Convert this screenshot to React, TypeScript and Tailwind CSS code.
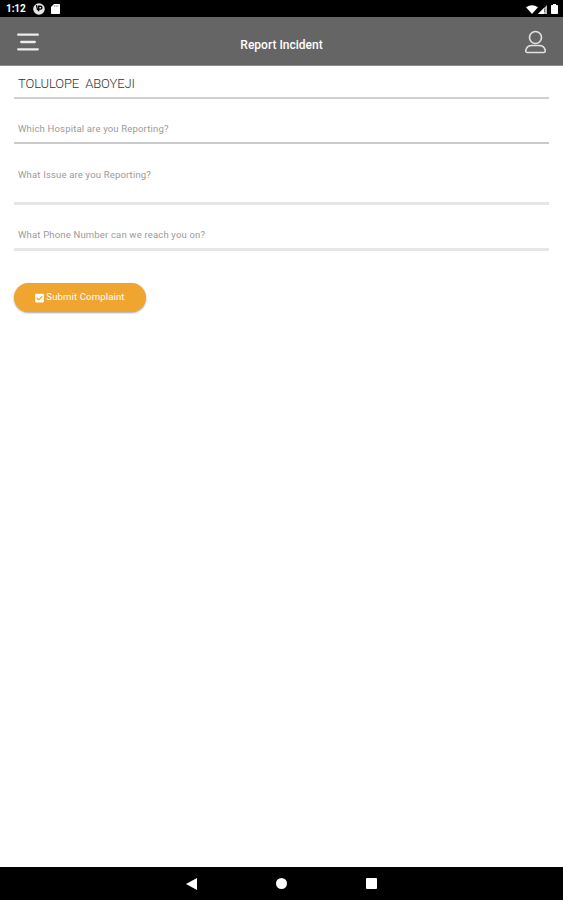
import { FaCheckSquare } from 'react-icons/fa';

function StatusBar() {
  return (
    <div className="flex h-[17px] items-center justify-between bg-black pl-[6px] pr-[5px] text-white">
      <div className="flex items-center pt-px">
        <span className="w-[27px] text-[10px] leading-none font-bold tracking-[-0.1px]">1:12</span>
        <svg className="h-[12px] w-[12px]" viewBox="0 0 11 11">
          <circle cx="5.5" cy="5.5" r="5.3" fill="#e6e6e6" />
          <path d="M3.200 2l1 4.500M5.200 7.500V3h1.700a1.300 1.300 0 0 1 0 2.600H5.400" fill="none" stroke="#000" strokeWidth="1.2" />
        </svg>
        <svg className="ml-[6px] h-[10px] w-[9px]" viewBox="0 0 9 10">
          <path d="M3 0h5.2q.8 0 .8.8v8.4q0 .8-.8.8H.8Q0 10 0 9.200V3z" fill="#fff" />
          <path d="M3.700 1.300v1.600M5.300 1.300v1.600M6.900 1.300v1.600" stroke="#777" strokeWidth=".7" />
        </svg>
      </div>
      <div className="flex items-center pt-px">
        <svg className="h-[9px] w-[12px]" viewBox="0 0 12 9">
          <path d="M0 2.200Q6-1.800 12 2.200L6 9z" fill="#fff" />
        </svg>
        <svg className="h-[9px] w-[9px]" viewBox="0 0 9 9">
          <path d="M9 0v9H0z" fill="#bbb" />
          <path d="M6 3v6H0z" fill="#fff" />
          <path d="M6.500 4v3" stroke="#555" strokeWidth=".8" />
        </svg>
        <svg className="ml-[4px] h-[10px] w-[7px]" viewBox="0 0 7 10">
          <path d="M2 0h3v1h1.300q.7 0 .7.7v7.600q0 .7-.7.7H.7Q0 10 0 9.300V1.700Q0 1 .7 1H2z" fill="#fff" />
        </svg>
      </div>
    </div>
  );
}

function Header() {
  return (
    <header className="flex h-[49px] items-center justify-between border-b border-[#8a8a8a] bg-[#656565] pt-[2px] pl-[17px] pr-[17px]">
      <button aria-label="Menu">
        <svg className="h-[18px] w-[22px]" viewBox="0 0 22 18" stroke="#ececec" strokeWidth="2.300" strokeLinecap="round">
          <path d="M1.200 1.700h19.600M4.200 9h13.600M1.200 16.300h19.600" />
        </svg>
      </button>
      <h1 className="pt-[5px] text-[12px] leading-none font-medium text-white">Report Incident</h1>
      <button aria-label="Profile">
        <svg className="h-[24px] w-[22px]" viewBox="0 0 22 24" fill="none" stroke="#e2e2e2" strokeWidth="1.600">
          <circle cx="11.500" cy="7.500" r="6" />
          <path d="M3.500 22.500h16c1.400 0 2-.9 1.700-2.200-.7-3.200-3.100-4.800-6.300-4.800H8.100c-3.200 0-5.600 1.600-6.300 4.800-.3 1.300.3 2.200 1.700 2.200z" />
        </svg>
      </button>
    </header>
  );
}

const placeholder = 'pl-[4px] text-[9.500px] leading-[12px] tracking-[0.170px] text-[#9a9a9a]';

export default function App() {
  return (
    <div
      className="flex h-[900px] w-full flex-col bg-white"
      style={{ fontFamily: 'Roboto, "Liberation Sans", sans-serif' }}
    >
      <StatusBar />
      <Header />

      {/* Complaint form */}
      <main className="flex-1 px-[14px]">
        <div className="h-[33px] border-b-2 border-[#d0d0d0] pt-[9px] pl-[4px] text-[13px] leading-[17px] font-light tracking-[-0.120px] whitespace-pre text-[#333]">
          TOLULOPE  ABOYEJI
        </div>
        <div className={`h-[45px] border-b-2 border-[#cbcbcb] pt-[24px] ${placeholder}`}>
          Which Hospital are you Reporting?
        </div>
        <div className={`h-[61px] border-b-[3px] border-[#e6e6e6] pt-[25px] ${placeholder}`}>
          What Issue are you Reporting?
        </div>
        <div className={`h-[46px] border-b-[3px] border-[#e6e6e6] pt-[24px] ${placeholder}`}>
          What Phone Number can we reach you on?
        </div>
        <button className="mt-[32px] flex h-[29px] w-[132px] items-center justify-center gap-[2px] rounded-full bg-[#f0a530] text-[9.500px] tracking-[0.160px] text-white shadow-[0_1px_2px_rgba(0,0,0,0.35)]">
          <FaCheckSquare className="h-[10px] w-[9px]" />
          Submit Complaint
        </button>
      </main>

      {/* Android navigation bar */}
      <nav className="flex h-[33px] items-center justify-center gap-[79px] bg-black">
        <svg className="h-[12px] w-[11px]" viewBox="0 0 11 12">
          <path d="M11 0v12L0 6z" fill="#fff" />
        </svg>
        <span className="h-[11px] w-[11px] rounded-full bg-white" />
        <span className="h-[11px] w-[11px] rounded-[1px] bg-white" />
      </nav>
    </div>
  );
}
